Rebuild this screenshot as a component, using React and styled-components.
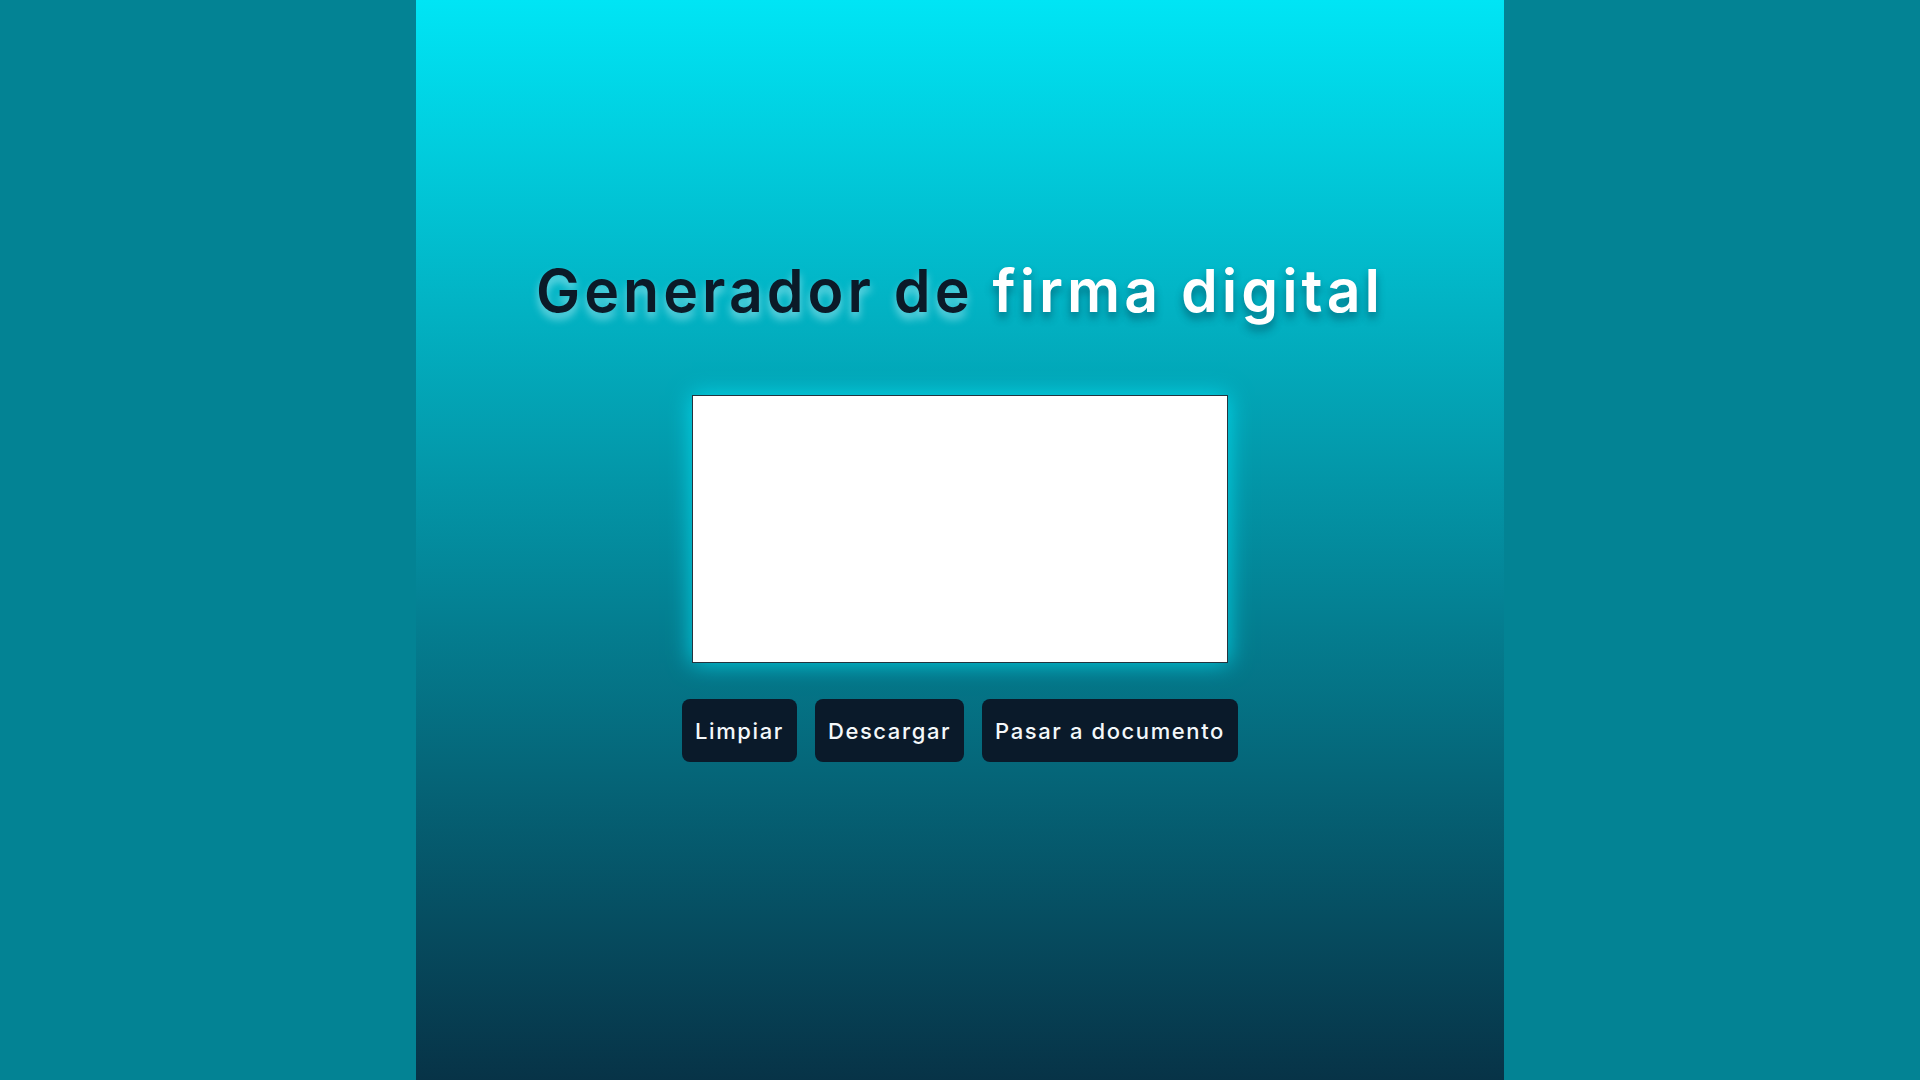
import React, { useRef } from "react";
import styled, { createGlobalStyle } from "styled-components";

const GlobalStyle = createGlobalStyle`
  * {
    box-sizing: border-box;
  }

  body {
    margin: 0;
    background-color: #038394;
    font-family: "Inter", "Noto Sans", sans-serif;
  }
`;

const Page = styled.div`
  display: flex;
  justify-content: center;
  min-height: 100vh;
  background-color: #038394;
`;

const Column = styled.main`
  display: flex;
  flex-direction: column;
  align-items: center;
  width: 1088px;
  height: 100vh;
  padding-top: 254px;
  background: linear-gradient(180deg, #00e5f5 0%, #073347 100%);
`;

const Title = styled.h1`
  margin: 0;
  font-family: "Inter", "Noto Sans", sans-serif;
  font-size: 59px;
  font-weight: 600;
  line-height: 74px;
  letter-spacing: 4px;
  color: #0b1a28;
  text-shadow: 0 6px 9px rgba(210, 250, 255, 0.55);

  span {
    color: #ffffff;
    text-shadow: 0 6px 9px rgba(0, 40, 60, 0.45);
  }
`;

const SignatureCanvas = styled.canvas`
  display: block;
  margin-top: 67px;
  width: 536px;
  height: 268px;
  background-color: #ffffff;
  border: 1px solid #24343f;
  box-shadow: 0 0 22px rgba(0, 235, 255, 0.75);
  cursor: crosshair;
`;

const BtnRow = styled.div`
  display: flex;
  gap: 18px;
  margin-top: 36px;
`;

const Button = styled.button`
  height: 63px;
  padding: 0 13px;
  border: none;
  border-radius: 8px;
  background-color: #0a1a2a;
  color: #f4f8fa;
  font-family: "Inter", "Noto Sans", sans-serif;
  font-size: 22px;
  font-weight: 500;
  letter-spacing: 1.6px;
  cursor: pointer;

  &:hover {
    background-color: #13293d;
  }
`;

const App = () => {
  const canvasRef = useRef(null);

  const clear = () => {
    const c = canvasRef.current;
    if (!c) return;
    c.getContext("2d").clearRect(0, 0, c.width, c.height);
  };

  return (
    <>
      <GlobalStyle />
      <Page>
        <Column>
          <Title>
            Generador de <span>firma digital</span>
          </Title>
          <SignatureCanvas ref={canvasRef} width={534} height={266} />
          <BtnRow>
            <Button onClick={clear}>Limpiar</Button>
            <Button>Descargar</Button>
            <Button>Pasar a documento</Button>
          </BtnRow>
        </Column>
      </Page>
    </>
  );
};

export default App;
